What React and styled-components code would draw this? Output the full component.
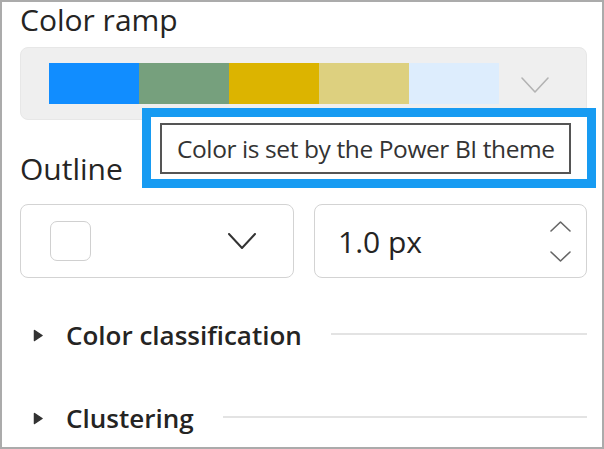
import React from 'react'
import styled, { createGlobalStyle } from 'styled-components'

const GlobalStyle = createGlobalStyle`
  body {
    margin: 0;
    font-family: "Open Sans", "Noto Sans", sans-serif;
    color: #252423;
    background: #fff;
  }
`

const Frame = styled.div`
  position: relative;
  width: 604px;
  height: 449px;
  box-sizing: border-box;
  border: 2px solid #ababab;
  padding: 0 15px 0 18px;
  overflow: hidden;
`

const Label = styled.div`
  font-size: 30px;
  line-height: 36px;
  margin-top: ${p => p.$top || 0}px;
`

const RampBox = styled.div`
  margin-top: 9px;
  height: 73px;
  box-sizing: border-box;
  background: #efefef;
  border: 1px solid #e7e7e7;
  border-radius: 8px;
  display: flex;
  align-items: flex-start;
  padding: 15px 0 0 28px;
`

const Ramp = styled.div`
  display: flex;
  height: 41px;
`

const Swatch = styled.div`
  width: 90px;
  height: 100%;
  background: ${p => p.$color};
`

const RampChevron = styled.svg`
  margin: 14px 0 0 22px;
`

const Highlight = styled.div`
  position: absolute;
  left: 140px;
  top: 106px;
  width: 454px;
  height: 80px;
  box-sizing: border-box;
  border: 9px solid #179bf2;
  background: #fff;
  padding: 6px 0 0 9px;
`

const Tooltip = styled.div`
  width: 411px;
  height: 51px;
  box-sizing: border-box;
  border: 2px solid #555;
  display: flex;
  align-items: center;
  padding-left: 15px;
  font-size: 24.5px;
  letter-spacing: -0.4px;
  color: #333;
  white-space: nowrap;
`

const InputRow = styled.div`
  margin-top: 17px;
  display: grid;
  grid-template-columns: 274px 273px;
  gap: 20px;
  height: 74px;
`

const Field = styled.div`
  box-sizing: border-box;
  border: 1.5px solid #d3d3d3;
  border-radius: 8px;
  display: flex;
  align-items: center;
`

const ColorChip = styled.div`
  width: 41px;
  height: 40px;
  box-sizing: border-box;
  border: 1.5px solid #d0d0d0;
  border-radius: 7px;
  margin-left: 29px;
`

const DropChevron = styled.svg`
  margin-left: auto;
  margin-right: 37px;
`

const Value = styled.span`
  font-size: 30px;
  line-height: 36px;
  padding-left: 23px;
  margin-top: 2px;
`

const Spinner = styled.div`
  margin-left: auto;
  margin-right: 15px;
  display: flex;
  flex-direction: column;
  gap: 19px;
`

const Section = styled.div`
  margin-top: ${p => p.$top}px;
  height: 40px;
  display: flex;
  align-items: center;
`

const Caret = styled.svg`
  margin-left: 13px;
  flex: none;
`

const SectionTitle = styled.span`
  margin-left: 23px;
  font-size: 26px;
  font-weight: 600;
  line-height: 40px;
  color: #252423;
  white-space: nowrap;
`

const Rule = styled.div`
  flex: 1;
  height: 2px;
  margin: -2px 0 0 29px;
  background: #e3e3e3;
`

const rampColors = ['#118dff', '#76a07d', '#dcb400', '#ddd07f', '#ddedfd']

const Chevron = ({ w, h, color, stroke, up, as: As }) => (
  <As width={w} height={h} viewBox={`0 0 ${w} ${h}`} fill="none">
    <polyline
      points={up ? `1,${h - 1} ${w / 2},1 ${w - 1},${h - 1}` : `1,1 ${w / 2},${h - 1} ${w - 1},1`}
      stroke={color}
      strokeWidth={stroke}
      strokeLinecap="round"
      strokeLinejoin="round"
    />
  </As>
)

const SectionHeader = ({ top, title }) => (
  <Section $top={top}>
    <Caret width="10" height="13" viewBox="0 0 10 13">
      <path d="M1.5 1.5 L9 6.5 L1.5 11.5 Z" fill="#333" stroke="#333" strokeWidth="1.5" strokeLinejoin="round" />
    </Caret>
    <SectionTitle>{title}</SectionTitle>
    <Rule />
  </Section>
)

export default () => (
  <>
    <GlobalStyle />
    <Frame>
      <Label>Color ramp</Label>
      <RampBox>
        <Ramp>
          {rampColors.map(c => <Swatch key={c} $color={c} />)}
        </Ramp>
        <Chevron as={RampChevron} w={28} h={16} color="#b3b3b3" stroke={1.6} />
      </RampBox>

      <Label $top={31}>Outline</Label>
      <InputRow>
        <Field>
          <ColorChip />
          <Chevron as={DropChevron} w={28} h={16} color="#333" stroke={2} />
        </Field>
        <Field>
          <Value>1.0 px</Value>
          <Spinner>
            <Chevron as="svg" w={21} h={11} color="#666" stroke={1.6} up />
            <Chevron as="svg" w={21} h={11} color="#666" stroke={1.6} />
          </Spinner>
        </Field>
      </InputRow>

      <SectionHeader top={37} title="Color classification" />
      <SectionHeader top={43} title="Clustering" />

      <Highlight>
        <Tooltip>Color is set by the Power BI theme</Tooltip>
      </Highlight>
    </Frame>
  </>
)
